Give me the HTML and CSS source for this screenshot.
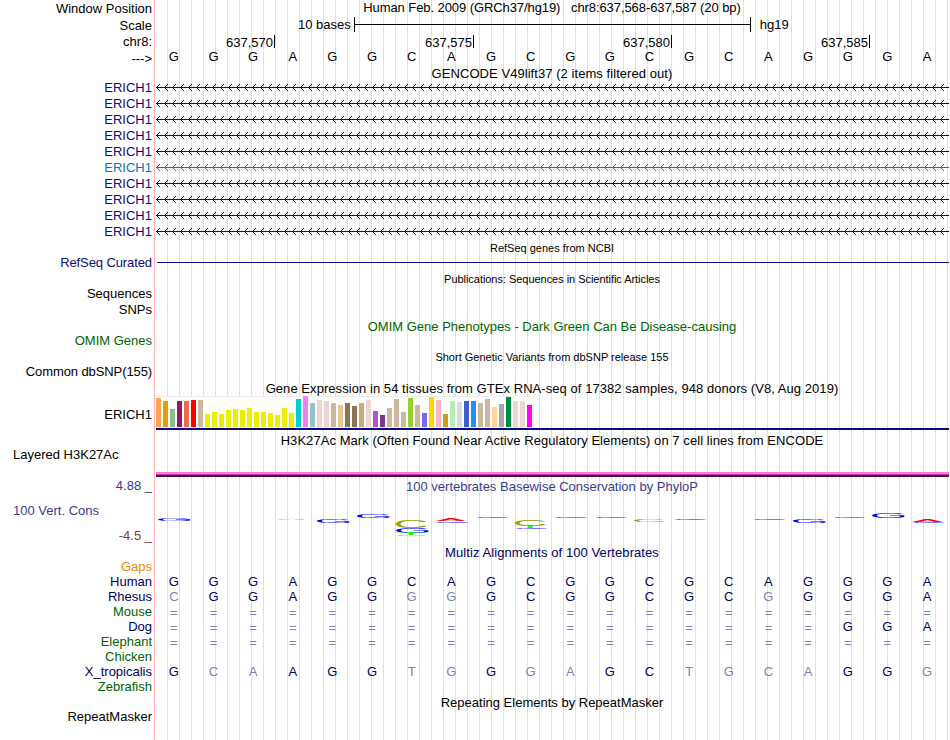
FILE: index.html
```html
<!DOCTYPE html>
<html lang="en">
<head>
<meta charset="utf-8">
<title>Genome Browser chr8:637,568-637,587</title>
<link rel="stylesheet" href="styles.css">
</head>
<body>
<main class="browser">
  <div class="row h17"><span class="label">Window Position</span><span class="title t-pos">Human Feb. 2009 (GRCh37/hg19) &nbsp; chr8:637,568-637,587 (20 bp)</span></div>
  <div class="row h16"><span class="label low">Scale</span><div class="scale"><span>10 bases</span><i></i><span>hg19</span></div></div>
  <div class="row h17"><span class="label">chr8:</span><div class="ruler"><span>637,570</span><span>637,575</span><span>637,580</span><span>637,585</span></div></div>
  <div class="row h15"><span class="label low">---&gt;</span><div class="bases reference" data-seq="GGGAGGCAGCGGCGCAGGGA"></div></div>
  <div class="row h14"><span></span><span class="title wide">GENCODE V49lift37 (2 items filtered out)</span></div>
  <div id="genes"></div>
  <div class="row h16"><span></span><span class="title small">RefSeq genes from NCBI</span></div>
  <div class="row h16 navy"><span class="label tight">RefSeq Curated</span><div class="line"></div></div>
  <div class="row h15"><span></span><span class="title small pub">Publications: Sequences in Scientific Articles</span></div>
  <div class="row h16"><span class="label">Sequences</span></div>
  <div class="row h16"><span class="label">SNPs</span></div>
  <div class="row h15 green"><span></span><span class="title">OMIM Gene Phenotypes - Dark Green Can Be Disease-causing</span></div>
  <div class="row h16 green"><span class="label">OMIM Genes</span></div>
  <div class="row h15"><span></span><span class="title small flat">Short Genetic Variants from dbSNP release 155</span></div>
  <div class="row h16"><span class="label tight">Common dbSNP(155)</span></div>
  <div class="row h16"><span></span><span class="title wide">Gene Expression in 54 tissues from GTEx RNA-seq of 17382 samples, 948 donors (V8, Aug 2019)</span></div>
  <div class="row gtex"><span class="label">ERICH1</span><div class="expression"><div id="bars"></div></div></div>
  <div class="row h18 mark"><span></span><span class="title wide">H3K27Ac Mark (Often Found Near Active Regulatory Elements) on 7 cell lines from ENCODE</span></div>
  <div class="row layered"><span class="label left">Layered H3K27Ac</span><div class="signal"></div></div>
  <div class="row cons">
    <div class="cons-labels"><span class="label slate">4.88 _</span><span class="label left slate">100 Vert. Cons</span><span class="label brown">-4.5 _</span></div>
    <div class="cons-main"><span class="title flat slate">100 vertebrates Basewise Conservation by PhyloP</span>
    <svg id="logo" width="794" height="44" viewBox="155 500 794 44"></svg></div>
  </div>
  <div class="row h15 deep"><span></span><span class="title multiz">Multiz Alignments of 100 Vertebrates</span></div>
  <div class="row h15 orange"><span class="label">Gaps</span></div>
  <div class="row h15 deep"><span class="label">Human</span><div class="bases" data-seq="GGGAGGCAGCGGCGCAGGGA"></div></div>
  <div class="row h15 deep"><span class="label">Rhesus</span><div class="bases" data-seq="cGGAGGggGCGGCGCgGGGA"></div></div>
  <div class="row h15 green"><span class="label">Mouse</span><div class="bases" data-seq="===================="></div></div>
  <div class="row h15 deep"><span class="label">Dog</span><div class="bases" data-seq="=================GGA"></div></div>
  <div class="row h15 green"><span class="label">Elephant</span><div class="bases" data-seq="===================="></div></div>
  <div class="row h15 green"><span class="label">Chicken</span></div>
  <div class="row h15 deep"><span class="label">X_tropicalis</span><div class="bases" data-seq="GcaAGGtgGgaGCtgcaGGg"></div></div>
  <div class="row h15 green"><span class="label">Zebrafish</span></div>
  <div class="row h15"><span></span><span class="title">Repeating Elements by RepeatMasker</span></div>
  <div class="row h14"><span class="label">RepeatMasker</span></div>
</main>
<script src="tracks.js"></script>
</body>
</html>
```
FILE: styles.css
```css
* { box-sizing: border-box; }
body { margin: 0; background: #fff; }
.browser {
  width: 949px;
  height: 740px;
  overflow: hidden;
  font: 13px/16px "Liberation Sans", Arial, sans-serif;
  color: #000;
  white-space: nowrap;
  background:
    linear-gradient(#ffb4b4, #ffb4b4) 154px 0 / 1px 100% no-repeat,
    repeating-linear-gradient(90deg, #dcdcf8 0 1px, transparent 1px 12px) 167px 0 / 782px 100% no-repeat;
}
.row { display: grid; grid-template-columns: 155px 794px; align-items: center; }
.h14 { height: 14px; }
.h15 { height: 15px; }
.h16 { height: 16px; }
.h17 { height: 17px; }
.h18 { height: 18px; }
.label { text-align: right; padding-right: 3px; }
.label.left { text-align: left; padding-left: 13px; }
.label.low, .gene .label { padding-top: 1px; }
.label.tight { letter-spacing: -.1px; }
.title { text-align: center; padding-top: 1px; }
.title.flat { padding-top: 0; }
.title.wide { letter-spacing: .06px; }
.title.multiz { letter-spacing: .08px; }
.title.t-pos { padding: 0 0 2px; letter-spacing: -.08px; }
.mark .title { padding-top: 3px; }
.small { font-size: 11px; }
.title.pub { padding-top: 0; letter-spacing: -.04px; }
.navy { color: #0c0c78; }
.deep { color: #000064; }
.green { color: #006400; }
.orange { color: #e68a00; }
.slate { color: #3c3c8c; }
.brown { color: #783c3c; }

.scale { display: flex; align-items: flex-start; align-self: start; height: 16px; padding-left: 143px; }
.scale i {
  width: 397px; height: 15px; margin: 0 9px 0 3px;
  border: solid #000; border-width: 0 1px;
  background: linear-gradient(#000, #000) 0 7px / 100% 1px no-repeat;
}
.ruler { display: grid; grid-template-columns: 120px 199px 198px 198px; }
.ruler span { height: 13px; line-height: 15px; text-align: right; padding-right: 1px; border-right: 1px solid #000; }

.bases { display: grid; grid-template-columns: repeat(20, 39.65px); text-align: center; }
.bases span { padding-right: 2px; }
.bases.reference { align-self: start; margin-top: -1px; }
.bases .diff, .bases .eq { color: #8080b4; }
.bases .eq { padding-top: 1px; line-height: 15px; }

.gene { color: #0c0c78; }
.gene.alt { color: #0f73b4; }
.gene svg { display: block; align-self: start; margin: 4px 0 0 1px; }
.line { height: 1px; margin: 0 0 1px 2px; background: #0c0c78; }

.gtex { height: 34px; }
.gtex .label { padding-top: 4px; }
.expression { height: 34px; margin-left: 1px; border-bottom: 2px solid #0c0c78; }
#bars {
  display: flex; align-items: flex-end; gap: 2px;
  width: 378px; height: 32px; background: #fff;
  border: solid #eee; border-width: 1px 1px 1px 0;
}
#bars i { width: 5px; flex: none; }
.layered { height: 29px; align-items: start; }
.layered .label { line-height: 14px; }
.layered .signal {
  height: 5px; margin: 24px 0 0 1px;
  background: linear-gradient(#ff78d2 0 2px, #c83cb4 2px 3px, #50143c 3px 5px);
}
.cons { height: 67px; align-items: start; }
.cons-labels { display: grid; grid-template-rows: 25px 25px 16px; padding-top: 1px; }
.cons-main { display: grid; grid-template-rows: 21px 44px; padding-top: 2px; }
#logo { display: block; font: 100px "Liberation Sans", Arial, sans-serif; }
```
FILE: tracks.js
```javascript
const SVG = 'http://www.w3.org/2000/svg';

// Base letters: lowercase marks a mismatch against the reference genome
document.querySelectorAll('.bases').forEach(row => {
  for (const ch of row.dataset.seq) {
    const cell = document.createElement('span');
    cell.textContent = ch.toUpperCase();
    if (ch === '=') cell.className = 'eq';
    else if (ch !== ch.toUpperCase()) cell.className = 'diff';
    row.append(cell);
  }
});

// Gene transcripts with reverse-strand chevrons every 8px
let chevrons = '';
for (let x = 0; x < 794; x += 8) chevrons += `M${x + 4} 1L${x + .5} 4.5L${x + 4} 8`;
const genes = document.getElementById('genes');
for (let i = 0; i < 10; i++) {
  genes.insertAdjacentHTML('beforeend',
    `<div class="row h16 gene${i === 5 ? ' alt' : ''}"><span class="label">ERICH1</span>` +
    `<svg width="793" height="8"><path d="M0 4.5H793" stroke="currentColor"/>` +
    `<path d="${chevrons}" fill="none" stroke="currentColor" stroke-width="1"/></svg></div>`);
}

// GTEx expression: [height, colour]
const Y = '#eeee00';
const bars = [[29,'#ffa54f'],[26,'#ee9a00'],[18,'#8fbc8f'],[26,'#8b1c62'],[26,'#ee6a50'],[27,'#ff0000'],[27,'#cdb79e'],
  [13,Y],[15,Y],[13,Y],[17,Y],[18,Y],[17,Y],[19,Y],[15,Y],[15,Y],[14,Y],[12,Y],[19,Y],[14,Y],
  [28,'#00cdcd'],[31,'#ee82ee'],[24,'#9ac0cd'],[27,'#eed5d2'],[26,'#eed5d2'],[24,'#cdb79e'],[22,'#eec591'],[24,'#8b7355'],
  [21,'#8b7355'],[24,'#cdaa7d'],[27,'#eed5d2'],[16,'#b452cd'],[12,'#7a378b'],[19,'#cdb79e'],[28,'#cdb79e'],[15,'#cdb79e'],
  [29,'#9acd32'],[22,'#cdb79e'],[14,'#7a67ee'],[30,'#ffd700'],[27,'#ffb6c1'],[13,'#cd9b1d'],[26,'#b4eeb4'],[25,'#d9d9d9'],
  [26,'#3a5fcd'],[26,'#1e90ff'],[24,'#cdb79e'],[28,'#cdb79e'],[20,'#ffd39b'],[23,'#a6a6a6'],[30,'#008b45'],[26,'#eed5d2'],
  [26,'#eed5d2'],[22,'#ff00ff']];
document.getElementById('bars').innerHTML =
  bars.map(([h, c]) => `<i style="height:${h}px;background:${c}"></i>`).join('');

// Conservation logo: [letter, left, top, width, height]
const ink = { G: [5, 67, 74], C: [5, 64, 74], A: [0, 67, 69], T: [2, 57, 69] };
const fill = { G: '#0000ff', C: '#a0a000', A: '#ff0000', T: '#00ff00' };
const logo = document.getElementById('logo');
[['G',158,519,33,2],['A',277,519,29,1],['G',317,519,33,4],['G',357,514,33,4],
 ['C',396,520,31,8],['G',396,528,33,5],['T',396,533,30,2],['A',396,535,30,1],
 ['A',436,519,30,2],['G',436,521,33,1.5],['G',477,517,32,1],
 ['C',515,519,31,7],['T',515,526,30,2],['G',516,528,32,1],
 ['G',555,516.5,33,1.5],['G',596,517,32,1],['C',634,519,31,3],['G',675,519,32,1],
 ['G',754,519,32,1],['G',793,519,33,4],['G',834,517,32,1],['G',872,513,33,5],
 ['A',912,519,31,3],['G',913,522,32,1]].forEach(([ch, x, y, w, h]) => {
  const [bearing, iw, ih] = ink[ch];
  const sx = w / iw, sy = h / ih;
  const t = document.createElementNS(SVG, 'text');
  t.textContent = ch;
  t.setAttribute('fill', fill[ch]);
  t.setAttribute('transform', `translate(${x - bearing * sx} ${y + h}) scale(${sx} ${sy})`);
  logo.append(t);
});
```
